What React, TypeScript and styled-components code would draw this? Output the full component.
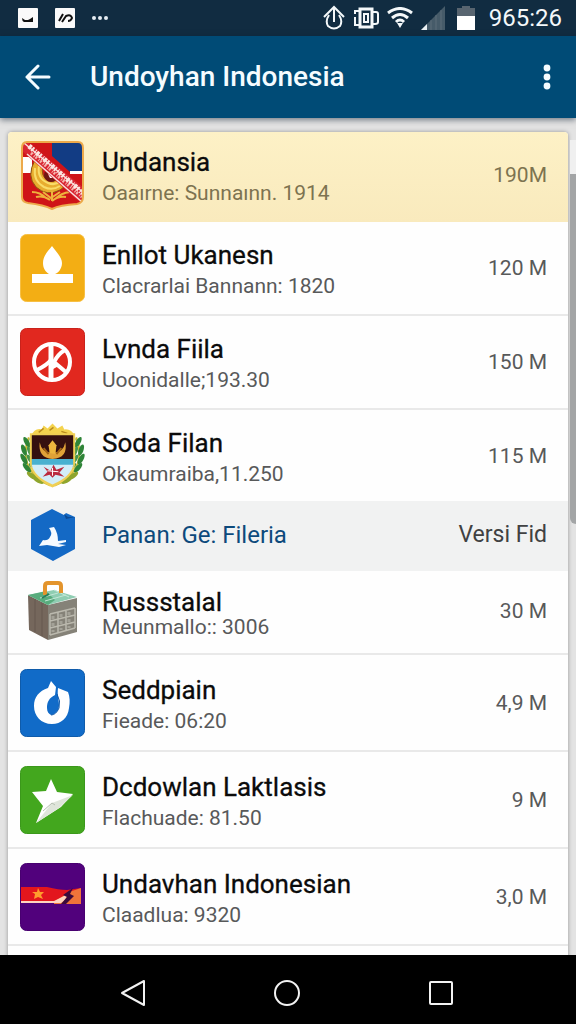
import React from "react";
import styled, { createGlobalStyle, css } from "styled-components";

const GlobalStyle = createGlobalStyle`
  *, *::before, *::after { box-sizing: border-box; }
  body { margin: 0; background: #e2e2e2; }
  button { font: inherit; color: inherit; background: none; border: 0; padding: 0; cursor: pointer; }
`;

const Screen = styled.div`
  display: flex;
  flex-direction: column;
  height: 100vh;
  overflow: hidden;
  font-family: Roboto, "Noto Sans", sans-serif;
  color: #0b0b0b;
`;

const StatusBar = styled.div`
  flex: none;
  display: flex;
  align-items: center;
  justify-content: space-between;
  height: 36px;
  padding: 0 14px 0 17px;
  background: #112c41;
  color: #f4f8fa;
`;

const StatusGroup = styled.div<{ $gap: number }>`
  display: flex;
  align-items: center;
  gap: ${(p) => p.$gap}px;
  svg { display: block; }
`;

const Clock = styled.time`
  font-size: 24px;
  line-height: 36px;
  margin-left: 6px;
`;

const AppBar = styled.header`
  flex: none;
  position: relative;
  display: flex;
  align-items: center;
  height: 82px;
  padding: 0 14px 0 16px;
  background: #004b76;
  color: #f5fcff;
  box-shadow: 0 2px 6px rgba(0, 20, 40, 0.5);
`;

const BarButton = styled.button`
  display: flex;
  align-items: center;
  justify-content: center;
  width: 44px;
  height: 48px;
`;

const MenuButton = styled(BarButton)`
  width: 30px;
`;

const Title = styled.h1`
  flex: 1;
  margin: 0 0 0 30px;
  font-size: 28px;
  line-height: 36px;
  font-weight: 500;
`;

const Body = styled.main`
  flex: 1;
  min-height: 0;
  display: flex;
  overflow: hidden;
  padding: 14px 0 0 8px;
  background: #e3e3e3;
`;

const Card = styled.ul`
  flex: 1;
  margin: 0;
  padding: 0;
  list-style: none;
  background: #fefefe;
  border-radius: 4px 4px 0 0;
  box-shadow: 0 0 4px rgba(0, 0, 0, 0.35);
  overflow: hidden;
  height: max-content;
`;

const Rail = styled.div`
  width: 8px;
  padding: 8px 0 0 2px;
`;

const RailTop = styled.div`
  height: 34px;
  background: #f0f0f0;
`;

const Thumb = styled.div`
  height: 43%;
  background: #a3a5a6;
  border-radius: 0 0 0 6px;
`;

type Kind = "featured" | "regular" | "short" | "section" | "compact" | "tall";

const kinds = {
  featured: css`
    height: 90px;
    padding-bottom: 4px;
    background: linear-gradient(#fdf1c6, #f9eabd);
    --muted: #7d7350;
  `,
  regular: css`
    height: 94px;
    border-bottom: 2px solid #e9e9e9;
  `,
  short: css`
    height: 91px;
  `,
  section: css`
    height: 70px;
    padding-bottom: 2px;
    background: #f1f2f2;
  `,
  compact: css`
    height: 84px;
    padding-bottom: 2px;
    border-bottom: 2px solid #e9e9e9;
  `,
  tall: css`
    height: 97px;
    border-bottom: 2px solid #e9e9e9;
  `,
};

const Row = styled.li<{ $kind: Kind }>`
  --muted: #58595a;
  display: flex;
  align-items: center;
  padding: 0 21px 0 12px;
  ${(p) => kinds[p.$kind]}
`;

const IconSlot = styled.div`
  flex: none;
  display: flex;
  justify-content: center;
  width: 65px;
  margin-right: 17px;
  svg { display: block; }
`;

const Texts = styled.div`
  flex: 1;
  min-width: 0;
  padding-top: 4px;
  white-space: nowrap;
`;

const Name = styled.div<{ $tight?: boolean }>`
  font-size: 26px;
  line-height: ${(p) => (p.$tight ? 28 : 32)}px;
  -webkit-text-stroke: 0.3px currentColor;
`;

const Detail = styled.div<{ $tight?: boolean }>`
  font-size: 21px;
  line-height: ${(p) => (p.$tight ? 22 : 30)}px;
  color: var(--muted);
`;

const Size = styled.div`
  font-size: 21px;
  line-height: 32px;
  color: var(--muted);
`;

const SectionName = styled.h2`
  flex: 1;
  margin: 0;
  font-size: 24px;
  line-height: 32px;
  font-weight: 400;
  color: #0d4a7c;
`;

const SectionNote = styled.div`
  font-size: 23px;
  line-height: 32px;
  color: #404142;
`;

const NavBar = styled.nav`
  flex: none;
  display: flex;
  align-items: center;
  justify-content: center;
  gap: 106px;
  height: 69px;
  padding: 6px 2px 0 0;
  background: #000;
  color: #f2f2f2;
`;

const NavButton = styled.button`
  display: flex;
  align-items: center;
  justify-content: center;
  width: 48px;
  height: 48px;
`;

const Tile = ({ fill, edge, children }: { fill: string; edge: string; children: React.ReactNode }) => (
  <svg width="65" height="68" viewBox="0 0 65 68" aria-hidden="true">
    <rect x="0.5" y="0.5" width="64" height="67" rx="6" fill={fill} stroke={edge} />
    {children}
  </svg>
);

const CrestIcon = () => (
  <svg width="65" height="71" viewBox="0 0 65 71" aria-hidden="true">
    <defs>
      <clipPath id="crest">
        <path d="M7 2H58Q63 2 63 8V57Q63 63 57 64Q40 65 32 69Q24 65 8 63Q2 62 2 57V8Q2 2 7 2Z" />
      </clipPath>
    </defs>
    <g clipPath="url(#crest)">
      <rect width="65" height="71" fill="#cf1418" />
      <path d="M32 0H65V32H50L32 16Z" fill="#123c84" />
      <path d="M0 17H12V33H0ZM50 31H65V34H50Z" fill="#fff" />
      <path d="M15 20Q6 36 16 47Q27 57 40 50Q47 46 46 38L40 35Q37 43 29 41Q20 37 23 25Z" fill="#e7ad2f" stroke="#8e5212" />
      <path d="M15 28Q13 41 24 47Q32 51 40 46M19 26Q17 39 28 43Q35 46 41 41" fill="none" stroke="#f9dc69" strokeWidth="2" />
      <circle cx="31" cy="35" r="7" fill="#6e1613" />
      <path d="M28 34H36V38H30Z" fill="#fff" />
      <path d="M12 52Q20 52 26 58M16 57Q23 55 30 60M50 52Q41 53 35 59M46 57Q38 56 32 61M32 51V61M23 52L31 58L40 52" fill="none" stroke="#eeb13c" strokeWidth="2" />
      <path d="M1 -3L64 48V66L1 10Z" fill="#d92632" />
      <path d="M4 3L64 53M7 14L62 62" stroke="#f9dedb" strokeWidth="1.5" />
      <path d="M9 6L63 53" stroke="#fbe7e1" strokeWidth="5" strokeDasharray="3 1 2 2 1 1" />
      <path d="M11 13L62 57" stroke="#f5b2ab" strokeWidth="3" strokeDasharray="2 2 1 1" />
    </g>
    <path d="M7 2H58Q63 2 63 8V57Q63 63 57 64Q40 65 32 69Q24 65 8 63Q2 62 2 57V8Q2 2 7 2Z" fill="none" stroke="#eda94a" strokeWidth="2" />
  </svg>
);

const FlameIcon = () => (
  <Tile fill="#f3ae14" edge="#f7bf43">
    <path d="M32 12C36 18 42 23 42 29C42 35 38 39 35 40H29C26 38 23 35 23 29C23 22 28 17 32 12Z" fill="#fff" />
    <path d="M12 40H53V49H12Z" fill="#fff" />
  </Tile>
);

const WheelIcon = () => (
  <Tile fill="#e1281f" edge="#c9221b">
    <g fill="none" stroke="#fff" strokeWidth="4">
      <circle cx="32" cy="34" r="18" />
      <path d="M31 15V52" strokeWidth="5" />
      <path d="M17 42Q27 37 31 32M45 22Q38 26 34 34L47 45M31 32L35 40" />
    </g>
  </Tile>
);

const leaves = [
  [7, 20, 60], [4, 28, 70], [4, 37, 60], [7, 46, 50], [12, 54, 35], [19, 59, 25],
];

const LaurelIcon = () => (
  <svg width="66" height="68" viewBox="0 0 66 68" aria-hidden="true">
    {[0, 1].map((side) => (
      <g key={side} transform={side ? "translate(66 0) scale(-1 1)" : undefined}>
        <path d="M9 15Q1 35 12 50Q18 59 31 64" fill="none" stroke="#cdbb35" strokeWidth="2" />
        {leaves.map(([x, y, a], i) => (
          <g key={i} transform={`translate(${x} ${y}) rotate(${a})`}>
            <ellipse rx="6" ry="2.4" fill={i < 4 ? "#2f8438" : "#8fa52d"} />
            <ellipse cx="3" cy="-5" rx="5" ry="2" fill={i < 4 ? "#46964a" : "#c7b535"} />
          </g>
        ))}
      </g>
    ))}
    <path d="M11 14Q15 5 22 7L24 3L28 6L33 1L38 6L43 3L45 7Q52 6 56 14Z" fill="#f4d34e" />
    <path d="M19 10L24 6M30 8L34 5M42 9L48 11" stroke="#b98b1d" strokeWidth="1.5" />
    <path d="M10 11H56V40Q56 55 33 66Q10 55 10 40Z" fill="#f0cf54" />
    <path d="M12 13H54V37H12Z" fill="#35100f" />
    <path d="M12 37H54V45H12Z" fill="#49b1d0" />
    <path d="M12 43H54Q52 55 33 63Q14 55 12 43Z" fill="#d3edf8" />
    <path d="M20 20Q22 31 33 31Q44 31 46 20Q49 36 33 37Q18 36 20 20Z" fill="#e0a238" />
    <path d="M30 31L29 23L33 18L37 23L36 32Z" fill="#edb63e" />
    <path d="M24 26L29 32M42 26L37 32" stroke="#a26516" strokeWidth="2" />
    <path d="M24 45L31 49L34 43L37 48L45 45L40 51L45 55L36 53L33 56L30 53L23 55L28 50Z" fill="#ba2a3d" />
    <path d="M33 46V54M28 49L39 50" stroke="#fff" strokeWidth="1" />
  </svg>
);

const HexIcon = () => (
  <svg width="46" height="54" viewBox="0 0 46 54" aria-hidden="true">
    <path d="M22 1L34 7L36 5L45 9V41L23 53L1 41V12Z" fill="#1469c5" />
    <path d="M34 6L38 9L45 9L36 11Z" fill="#0c4a94" />
    <path d="M19 20L24 19Q28 25 28 33L36 32V34L28 36L36 37L29 39L17 37L9 38L13 32Q18 33 20 29Q23 25 19 20Z" fill="#f7fbff" />
  </svg>
);

const BoxIcon = () => (
  <svg width="52" height="60" viewBox="0 0 52 60" aria-hidden="true">
    <path d="M1 14L21 24V59L2 49Z" fill="#75675c" />
    <path d="M21 24L50 17V51L21 59Z" fill="#858278" />
    <path d="M1 14L27 9L50 16L21 24Z" fill="#8fcdb2" />
    <path d="M1 14L19 10L28 19L21 24Z" fill="#58ac7d" />
    <path d="M13 17L31 12M18 20L39 14M27 9L42 16" stroke="#c3e7d7" strokeWidth="1" />
    <path d="M18 14V5Q18 2 21 2H31Q34 2 34 5V12" fill="none" stroke="#e3942c" strokeWidth="4" />
    <path d="M15 17L22 13" stroke="#287e58" strokeWidth="2" />
    <path d="M23 33L48 27M23 40L48 34M23 47L48 41M23 54L48 47M23 33V54M31 31V52M39 29V50M48 27V47" stroke="#bbb9ae" strokeWidth="1.5" fill="none" />
    <path d="M26 35V38M34 33V36M42 31V34M26 42V45M34 40V43M42 38V41M26 49V51M34 47V49M42 45V47" stroke="#a3a197" strokeWidth="3" />
    <path d="M8 18V51M15 22V55" stroke="#66584e" strokeWidth="1" />
  </svg>
);

const DropIcon = () => (
  <Tile fill="#116bc8" edge="#0f5baa">
    <path d="M31 12L36 18L35 26C29 29 27 33 27 39C27 43 29 45 31 46C36 45 39 41 39 36C39 30 37 27 38 19L48 23C50 28 50 33 49 39C48 49 41 55 32 55C21 55 14 47 14 37C14 28 19 22 28 19Z" fill="#fff" />
    <path d="M37 25Q41 32 39 39Q36 46 31 46" fill="none" stroke="#0e58a9" strokeWidth="1" />
  </Tile>
);

const StarIcon = () => (
  <Tile fill="#43a71e" edge="#3b981b">
    <path d="M31 13L37 26L53 28L41 41L16 57L23 40L12 26L26 25Z" fill="#fff" />
    <path d="M53 29L32 37L16 57L39 42Z" fill="#dfe5db" />
    <path d="M23 45L32 37L35 39" fill="none" stroke="#b5beb0" />
  </Tile>
);

const FlagIcon = () => (
  <Tile fill="#51017c" edge="#480070">
    <path d="M1 24H27Q39 27 47 27L61 25V40H1Z" fill="#e3161d" />
    <path d="M34 39L49 29L61 25V41H34Z" fill="#ef743a" />
    <path d="M1 38H34L48 31L45 37L41 40H1Z" fill="#ffd4be" />
    <path d="M41 41L47 34L43 32L53 25L50 31L54 33L46 41Z" fill="#3b0a3c" />
    <path d="M18 25L20 29L24 29L21 32L23 36L18 34L14 36L15 31L12 29L17 29Z" fill="#ff9d2d" />
  </Tile>
);

interface Entry {
  kind: Kind;
  icon: React.FC;
  name: string;
  detail?: string;
  size: string;
}

const entries: Entry[] = [
  { kind: "featured", icon: CrestIcon, name: "Undansia", detail: "Oaaırne: Sunnaınn. 1914", size: "190M" },
  { kind: "regular", icon: FlameIcon, name: "Enllot Ukanesn", detail: "Clacrarlai Bannann: 1820", size: "120 M" },
  { kind: "regular", icon: WheelIcon, name: "Lvnda Fiila", detail: "Uoonidalle;193.30", size: "150 M" },
  { kind: "short", icon: LaurelIcon, name: "Soda Filan", detail: "Okaumraiba,11.250", size: "115 M" },
  { kind: "section", icon: HexIcon, name: "Panan: Ge: Fileria", size: "Versi Fid" },
  { kind: "compact", icon: BoxIcon, name: "Russstalal", detail: "Meunmallo:: 3006", size: "30 M" },
  { kind: "tall", icon: DropIcon, name: "Seddpiain", detail: "Fieade: 06:20", size: "4,9 M" },
  { kind: "tall", icon: StarIcon, name: "Dcdowlan Laktlasis", detail: "Flachuade: 81.50", size: "9 M" },
  { kind: "tall", icon: FlagIcon, name: "Undavhan Indonesian", detail: "Claadlua: 9320", size: "3,0 M" },
];

const EntryRow = ({ kind, icon: Icon, name, detail, size }: Entry) => (
  <Row $kind={kind}>
    <IconSlot>
      <Icon />
    </IconSlot>
    {kind === "section" ? (
      <>
        <SectionName>{name}</SectionName>
        <SectionNote>{size}</SectionNote>
      </>
    ) : (
      <>
        <Texts>
          <Name $tight={kind === "compact"}>{name}</Name>
          <Detail $tight={kind === "compact"}>{detail}</Detail>
        </Texts>
        <Size>{size}</Size>
      </>
    )}
  </Row>
);

export default function App() {
  return (
    <Screen>
      <GlobalStyle />
      <StatusBar>
        <StatusGroup $gap={15}>
          <svg width="22" height="22" viewBox="0 0 22 22" aria-hidden="true">
            <rect x="1" y="1" width="20" height="20" rx="1" fill="#fafafa" />
            <path d="M5 11L8 13L11 13L13 12L16 10V15H7Q5 14 5 11Z" fill="#111" />
          </svg>
          <svg width="22" height="22" viewBox="0 0 22 22" aria-hidden="true">
            <rect x="1" y="1" width="20" height="20" rx="1" fill="#fafafa" />
            <path d="M5 14L9 7M8 15L12 9Q17 7 18 11Q17 14 14 14" fill="none" stroke="#111" strokeWidth="2" />
          </svg>
          <svg width="18" height="6" viewBox="0 0 18 6" aria-hidden="true" fill="#e5edf2">
            <circle cx="3" cy="3" r="2" />
            <circle cx="9" cy="3" r="2" />
            <circle cx="15" cy="3" r="2" />
          </svg>
        </StatusGroup>
        <StatusGroup $gap={8}>
          <svg width="22" height="26" viewBox="0 0 22 26" aria-hidden="true" fill="none" stroke="#f4f8fa" strokeWidth="2">
            <path d="M1 12L11 2L21 12M11 2V17M6 10Q2 16 5 21Q11 26 17 21Q20 16 16 10" />
          </svg>
          <svg width="26" height="24" viewBox="0 0 26 24" aria-hidden="true" fill="none" stroke="#f4f8fa" strokeWidth="2">
            <path d="M7 3H19V21H7Z" strokeWidth="3" />
            <path d="M6 5H2V8M2 11V19H6M19 6H23Q25 6 25 8V16Q25 18 22 18H19" />
            <path d="M11 8H15V16H11Z" />
          </svg>
          <svg width="26" height="22" viewBox="0 0 26 22" aria-hidden="true" fill="none" stroke="#f4f8fa" strokeWidth="3">
            <path d="M1 6Q13 -3 25 6M5 11Q13 4 21 11M9 15Q13 11 17 15" />
            <path d="M10 16H16L13 21Z" fill="#f4f8fa" stroke="none" />
          </svg>
          <svg width="28" height="24" viewBox="0 0 28 24" aria-hidden="true">
            <path d="M0 24L24 0V24Z" fill="#465b69" />
            <path d="M10 14V24M15 9V24M20 4V24" stroke="#5d6f7b" />
            <path d="M0 24L6 18V24Z" fill="#e9eff2" />
          </svg>
          <svg width="18" height="24" viewBox="0 0 18 24" aria-hidden="true">
            <path d="M5 0H13V2H18V10H0V2H5Z" fill="#586570" />
            <path d="M0 10H18V24H0Z" fill="#fff" />
          </svg>
          <Clock>965:26</Clock>
        </StatusGroup>
      </StatusBar>
      <AppBar>
        <BarButton aria-label="Back">
          <svg width="26" height="26" viewBox="0 0 26 26" fill="none" stroke="currentColor" strokeWidth="3" strokeLinecap="round" strokeLinejoin="round">
            <path d="M13 2L2 13L13 24M2 13H24" />
          </svg>
        </BarButton>
        <Title>Undoyhan Indonesia</Title>
        <MenuButton aria-label="More options">
          <svg width="8" height="26" viewBox="0 0 8 26" fill="currentColor">
            <circle cx="4" cy="4" r="3.4" />
            <circle cx="4" cy="13" r="3.4" />
            <circle cx="4" cy="22" r="3.4" />
          </svg>
        </MenuButton>
      </AppBar>
      <Body>
        <Card>
          {entries.map((entry) => (
            <EntryRow key={entry.name} {...entry} />
          ))}
          <Row $kind="tall" />
        </Card>
        <Rail aria-hidden="true">
          <RailTop />
          <Thumb />
        </Rail>
      </Body>
      <NavBar>
        <NavButton aria-label="Back">
          <svg width="26" height="28" viewBox="0 0 26 28" fill="none" stroke="currentColor" strokeWidth="2" strokeLinejoin="round">
            <path d="M24 2V26L2 14Z" />
          </svg>
        </NavButton>
        <NavButton aria-label="Home">
          <svg width="26" height="26" viewBox="0 0 26 26" fill="none" stroke="currentColor" strokeWidth="2">
            <circle cx="13" cy="13" r="12" />
          </svg>
        </NavButton>
        <NavButton aria-label="Recent apps">
          <svg width="24" height="24" viewBox="0 0 24 24" fill="none" stroke="currentColor" strokeWidth="2">
            <rect x="1" y="1" width="22" height="22" rx="1" />
          </svg>
        </NavButton>
      </NavBar>
    </Screen>
  );
}
